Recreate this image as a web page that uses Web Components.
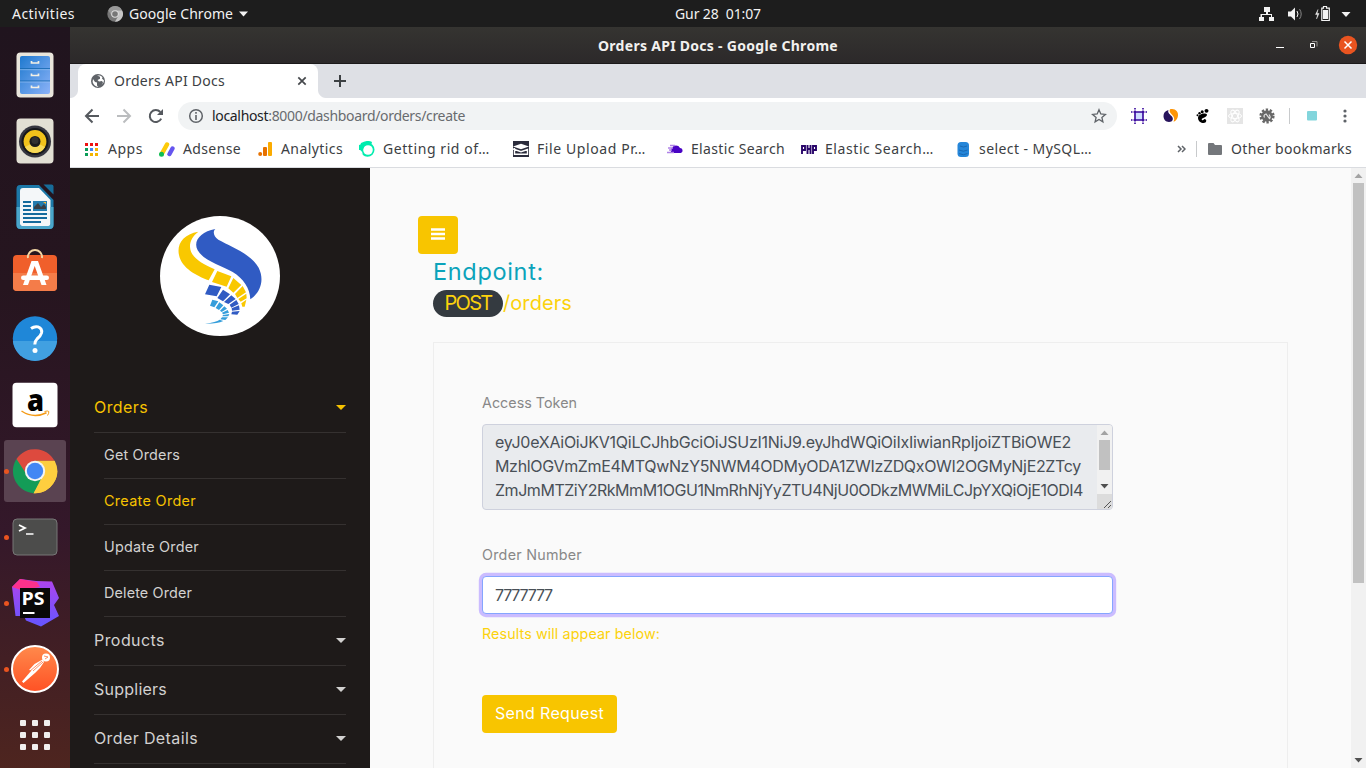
<!DOCTYPE html>
<html lang="en">
<head>
<meta charset="utf-8">
<title>Orders API Docs</title>
<style>
html,body{margin:0;height:100%;overflow:hidden;background:#20141e}
</style>
</head>
<body>
<desk-top></desk-top>
<script>
const make = (name, html, extra) => {
  const t = document.createElement('template');
  t.innerHTML = html;
  customElements.define(name, class extends HTMLElement {
    constructor() {
      super();
      this.attachShadow({mode: 'open'}).append(t.content.cloneNode(true));
    }
    connectedCallback() { if (extra) extra(this, this.shadowRoot); }
  });
};

make('desk-top', `<style>
:host{display:grid;grid-template:27px 741px / 70px 1296px;width:1366px;height:768px;font-family:"Noto Sans","Open Sans",sans-serif;overflow:hidden}
top-bar{grid-column:1/3}
</style><top-bar></top-bar><app-dock></app-dock><browser-window></browser-window>`);

make('top-bar', `<style>
:host{display:grid;grid-template-columns:675px 86px 1fr;align-items:center;background:#1d1d1d;color:#f2f2f2;font-size:14px;line-height:27px;height:27px}
.l,.r{display:flex;align-items:center}
.l{padding-left:12px}.r{justify-content:flex-end;padding-right:15px}
svg{display:block}
.c{margin-left:32px;margin-right:6px}.d{margin-left:6px}
</style>
<div class="l"><fit-text w="63">Activities</fit-text>
<svg class="c" width="16" height="16" viewBox="0 0 16 16"><circle cx="8" cy="8" r="7.7" fill="#777"/><path d="M8 4.2H15A7.7 7.7 0 0 1 8 15.7L11.4 9.7Z" fill="#c6c6c6"/><path d="M1.3 4.2A7.7 7.7 0 0 1 15 4.2H8L4.6 10Z" fill="#989898"/><circle cx="8" cy="8" r="3.8" fill="#ddd"/><circle cx="8" cy="8" r="2.8" fill="#777"/></svg>
<fit-text w="104">Google Chrome</fit-text>
<svg class="d" width="9" height="6" viewBox="0 0 9 6"><path d="M0 .5h9L4.500 5.500z" fill="#f2f2f2"/></svg></div>
<fit-text w="86">Gur 28  01:07</fit-text>
<div class="r">
<svg width="93" height="18" viewBox="1258 4 93 18" fill="#f2f2f2"><path d="M1264 6h6v5h-2v2h4v3h2v4h-5v-4h2v-2h-9v2h2v4h-5v-4h1.500v-3h5.500v-2h-2z"/><path d="M1288 10.500h3l4-4v13l-4-4h-3z"/><path d="M1297 10q2 3 0 6" fill="none" stroke="#f2f2f2"/><path d="M1299.500 8q3.400 5 0 10" fill="none" stroke="#888"/><path d="M1318 8.500l-2.500 5h2l-1 4.500 2.600-5.500h-2z" stroke="#f2f2f2" stroke-width=".4"/><path d="M1321.800 7.200h1.700V5.500h3v1.700h2.800v12.300h-7.500z" fill="none" stroke="#f2f2f2" stroke-width="1.200"/><path d="M1323 9h5v9h-5z"/><path d="M1341.500 11h9l-4.500 5z"/></svg>
</div>`);

make('app-dock', `<style>
:host{display:grid;grid-auto-rows:66px;align-content:start;padding-top:15px;box-sizing:border-box;height:741px;overflow:hidden;background:linear-gradient(#20141e,#26151f 35%,#34182a 68%,#4e251f)}
</style>
<dock-item><svg viewBox="11 51 48 48"><defs><linearGradient id="g" x2="1" y2="1"><stop stop-color="#1e79cf"/><stop offset="1" stop-color="#8cb3f8"/></linearGradient></defs><rect x="16.500" y="52.500" width="37" height="45" rx="4" fill="#e9e6dc"/><rect x="20" y="56" width="30" height="38" rx="2" fill="url(#g)"/><path d="M20 68.700h30M20 81h30" stroke="#1769b1"/><path d="M20 69.700h30M20 82h30" stroke="#a4cbf8" stroke-width=".6"/><path d="M31.500 61v2h7v-2M31.500 73.500v2h7v-2M31.500 85.500v2h7v-2" fill="none" stroke="#f4f0e5" stroke-width="1.700"/></svg></dock-item>
<dock-item><svg viewBox="11 117 48 48"><rect x="16.500" y="118.500" width="37" height="45" rx="4" fill="#e2dfd4"/><circle cx="35" cy="141.500" r="16" fill="#363640"/><circle cx="35" cy="141.500" r="13.500" fill="#16171b"/><circle cx="35" cy="141.500" r="11.400" fill="#f1c21b"/><path d="M25 147a11.400 11.400 0 0 0 20 0L35 142z" fill="#f7d957"/><circle cx="35" cy="141.500" r="5.500" fill="#1b1b1c"/><circle cx="35" cy="140.500" r="3.500" fill="#313131"/></svg></dock-item>
<dock-item><svg viewBox="11 183 48 48"><path d="M20 185h19l14.500 15v25q0 4-4 4H20.500q-4 0-4-4V189q0-4 3.500-4z" fill="#1c78a8"/><path d="M23 188h16l11.500 12v24q0 2-2 2H22q-2 0-2-2v-33q0-3 3-3z" fill="#f4f7f9"/><path d="M43.500 184.500h8q2 0 2 2v8z" fill="#176c99"/><path d="M16.500 207h3.500v17q0 2 2 2h26.500q2 0 2-2v-17h3v18q0 4-4 4H20.500q-4 0-4-4z" fill="#4aa5ca"/><path d="M23 202h8M23 206h8M23 210h8M23 214h24M23 218h24M23 222h18" stroke="#156b9d" stroke-width="2"/><rect x="33" y="201" width="14" height="10" fill="#247caf"/><path d="M34 209v-2l4-4 3 4 3-3 2 3v2z" fill="#394047"/><path d="M43 202h3v2z" fill="#fb3"/></svg></dock-item>
<dock-item><svg viewBox="11 249 48 48"><path d="M28 258v-1a7 7 0 0 1 14 0v1" fill="none" stroke="#f2d6a5" stroke-width="2"/><rect x="13" y="255" width="44" height="36" rx="4" fill="#f05f2b"/><path d="M13 273h44v14q0 4-4 4H17q-4 0-4-4z" fill="#f47c49"/><path d="M28 258a7 5 0 0 1 .3-3m13.600 3a7 5 0 0 0-.3-3" stroke="#f2d6a5" stroke-width="2" fill="none"/><path d="M31.500 261h6.500l8.500 24H41.500l-6.800-19-6.700 19H23z" fill="#fff"/><rect x="21" y="275.500" width="28" height="4.500" rx="2.200" fill="#fff"/></svg></dock-item>
<dock-item><svg viewBox="11 315 48 48"><circle cx="35" cy="338.500" r="22.200" fill="#1f87d8"/><path d="M12.900 341a22.200 22.200 0 0 0 44.200 0z" fill="#41a0e1"/><path d="M31 328.500q3.500-2.500 7-1.600 4.500 1.500 3.500 6.100-.7 2.800-4.500 6-2.100 2-2.200 5.500" fill="none" stroke="#fff" stroke-width="3"/><circle cx="35" cy="350.500" r="2.500" fill="#fff"/></svg></dock-item>
<dock-item><svg viewBox="11 381 48 48"><rect x="12.500" y="382.700" width="45" height="44.600" rx="4" fill="#fff"/><text x="27" y="410.700" font-family="Open Sans" font-weight="800" font-size="29.500" fill="#000" textLength="17" lengthAdjust="spacingAndGlyphs">a</text><path d="M21.500 411q12 8 25 1.800" fill="none" stroke="#f49b17" stroke-width="1.500"/><path d="M44.500 411.500q3.500-1 4.300 0 .3 1.700-1.300 4" fill="none" stroke="#f49b17"/></svg></dock-item>
<dock-item on dot><svg viewBox="11 447 48 48"><path d="M35 471h22.200A22.200 22.200 0 0 1 33.500 493.200z" fill="#fece3f"/><path d="M16.500 459A22.200 22.200 0 0 0 33.700 493.200L43 475l-8-6z" fill="#149c57"/><path d="M16.500 459A22.200 22.200 0 0 1 54.500 460.800H35L27 475z" fill="#dd4a3e"/><path d="M44 475.500l-10.300 17.700A22.200 22.200 0 0 0 54.700 460.800H35z" fill="#fece3f"/><circle cx="35" cy="471" r="10.200" fill="#f4f4f4"/><circle cx="35" cy="471" r="8.200" fill="#4287f4"/></svg></dock-item>
<dock-item dot><svg viewBox="11 513 48 48"><rect x="13" y="519" width="44" height="36" rx="4" fill="#4c4c4b" stroke="#777"/><path d="M19 525l6 3-6 3" fill="none" stroke="#fff" stroke-width="1.800"/><path d="M26 534h7.500" stroke="#fff" stroke-width="1.500"/></svg></dock-item>
<dock-item dot><svg viewBox="11 579 48 48"><defs><linearGradient id="p" x2="0" y2="1"><stop stop-color="#b144ee"/><stop offset="1" stop-color="#6456ff"/></linearGradient></defs><path d="M12 587l8-8 16 2 16 .5 7 16.500-5 7 5 11-18 10.500-15-6-2-4.500h-8.500z" fill="url(#p)"/><path d="M12 587l8-8 17 3 3 5-19 3z" fill="#fc318c"/><rect x="20" y="588" width="30" height="30" fill="#090909"/><text x="21.500" y="604.500" font-family="Open Sans" font-size="17" font-weight="700" fill="#fff" textLength="23" lengthAdjust="spacingAndGlyphs">PS</text><path d="M23 613h11.500" stroke="#fff" stroke-width="2"/></svg></dock-item>
<dock-item dot><svg viewBox="11 645 48 48"><defs><linearGradient id="o" x2="0" y2="1"><stop stop-color="#ff8a4c"/><stop offset="1" stop-color="#ff5124"/></linearGradient></defs><circle cx="35" cy="669" r="23" fill="url(#o)" stroke="#fff" stroke-width="2"/><circle cx="46" cy="657.500" r="4" fill="#fff"/><path d="M42.500 659.500l-8 4.500-5.500 6 2.500.5-9.500 11 1.500 1.500 11.500-10 5-5 4-6z" fill="#fff"/><path d="M42 661l-12 10m13-9-10 9M44 656l4 1-3 2" fill="none" stroke="#ff7340" stroke-width=".8"/></svg></dock-item>
<dock-item><svg viewBox="11 711 48 48" fill="#f1efee"><g id="r"><rect x="20" y="720" width="6" height="6" rx="1"/><rect x="32" y="720" width="6" height="6" rx="1"/><rect x="44" y="720" width="6" height="6" rx="1"/></g><use href="#r" y="12"/><use href="#r" y="24"/></svg></dock-item>`);

make('dock-item', `<style>
:host{display:flex;align-items:center;padding:2px 4px;box-sizing:border-box;height:66px}
div{display:flex;align-items:center;width:62px;height:62px;border-radius:3px}
:host([on]) div{background:#5a4351}
i{width:5px;height:5px;margin-right:2px;border-radius:50%}
:host([dot]) i{background:#e95420}
::slotted(svg){display:block;width:48px;height:48px}
</style><div><i></i><slot></slot></div>`);

make('browser-window', `<style>
:host{display:grid;grid-template-rows:37px 34px 36px 33px 1px 600px;background:#fff;overflow:hidden}
.line{background:#dadce0}
.page{display:grid;grid-template-columns:300px 981px 15px;overflow:hidden;font-family:Inter,sans-serif}
</style><title-bar></title-bar><tab-strip></tab-strip><tool-bar></tool-bar><bookmark-bar></bookmark-bar><div class="line"></div><div class="page"><side-bar></side-bar><main-view></main-view><page-scroll></page-scroll></div>`);

make('title-bar', `<style>
:host{display:grid;grid-template-columns:1fr auto 1fr;align-items:center;background:linear-gradient(#353431,#2c292a);border-bottom:1px solid #1b191a;box-sizing:border-box;color:#f2f1ef;font-size:14px;font-weight:700;line-height:34px}
svg{justify-self:end;display:block}
fit-text{padding-top:2px}
</style><span></span><fit-text w="240">Orders API Docs - Google Chrome</fit-text>
<svg width="96" height="20" viewBox="1270 35 96 20"><path d="M1276 47.500h8" stroke="#fff"/><path d="M1310.500 43.500h4v4h-4z" fill="none" stroke="#fff"/><path d="M1312 41.500h5v5" fill="none" stroke="#918f8c"/><circle cx="1348" cy="45" r="9.200" fill="#e95420"/><path d="M1344.500 41.500l7 7m0-7l-7 7" stroke="#fff" stroke-width="1.500"/></svg>`);

make('tab-strip', `<style>
:host{display:flex;align-items:center;background:#dee0e5;color:#3c4043;font-size:14px;line-height:34px}
svg{display:block}
.s{width:8px;height:34px;background:radial-gradient(circle at 0 0,#dee0e5 7.500px,#fff 8.500px) 0 100%/8px 8px no-repeat}
.s.r{background:radial-gradient(circle at 8px 0,#dee0e5 7.500px,#fff 8.500px) 0 100%/8px 8px no-repeat}
.tab{display:flex;align-items:center;width:240px;height:34px;background:#fff;border-radius:8px 8px 0 0;box-sizing:border-box;padding:0 11px 0 13px}
.x{margin-left:auto}.p{margin-left:8px}
</style><div class="s"></div><div class="tab"><svg width="14" height="14" viewBox="0 0 14 14"><circle cx="7" cy="7" r="7" fill="#5f6368"/><path d="M2 5l2 3 2 .5v3l1.500 1.500Q3 12.500 1.600 8zM6 1.500l3 1.200v2L6.500 6 8 7.500l3-.5 1 1.500-1.500 2.500 2-2.500.5-2-2-2 .5-1.500L9 1.500z" fill="#fff"/></svg><fit-text w="111" style="margin-left:9px">Orders API Docs</fit-text><svg class="x" width="10" height="10" viewBox="0 0 10 10"><path d="M1.300 1.300l7.400 7.400m0-7.400L1.300 8.700" stroke="#45484c" stroke-width="1.700"/></svg></div><div class="s r"></div>
<svg class="p" width="12" height="12" viewBox="0 0 12 12"><path d="M6 0v12M0 6h12" stroke="#3c4043" stroke-width="2"/></svg>`);

make('tool-bar', `<style>
:host{display:flex;align-items:center;padding:0 13px 0 14px;height:36px;box-sizing:border-box}
svg{display:block;flex:none}
.nav,.ext{display:flex;align-items:center}.nav{gap:16px}.ext{gap:16px;margin-left:14px}
.box{display:flex;align-items:center;flex:none;width:939px;height:28px;box-sizing:border-box;padding:0 10px;margin-left:14px;border-radius:14px;background:#f1f3f4;color:#686b6f;font-size:14px;line-height:28px}
b{font-weight:400;color:#202124}.star{margin-left:auto}
.v{width:1px;height:16px;background:#c8cacc;margin:0 1px 0 -2px}
</style>
<div class="nav"><svg width="16" height="16" viewBox="0 0 16 16"><path d="M15 8H2.500M8.500 1.500L2 8l6.500 6.500" fill="none" stroke="#55595e" stroke-width="2"/></svg><svg width="16" height="16" viewBox="0 0 16 16"><path d="M1 8h12.500M7.500 1.500L14 8l-6.500 6.500" fill="none" stroke="#bbbdbf" stroke-width="2"/></svg><svg width="16" height="16" viewBox="0 0 16 16"><path d="M13.200 10.600A6 6 0 1 1 12.300 4" fill="none" stroke="#55595e" stroke-width="2"/><path d="M15 1v6H9z" fill="#55595e"/></svg></div>
<div class="box"><svg width="16" height="16" viewBox="0 0 16 16"><circle cx="8" cy="8" r="6.300" fill="none" stroke="#5f6368" stroke-width="1.500"/><path d="M8 7v5M8 4v1.700" stroke="#5f6368" stroke-width="1.600"/></svg><fit-text w="253" style="margin-left:8px"><b>localhost</b>:8000/dashboard/orders/create</fit-text><svg class="star" width="16" height="16" viewBox="0 0 16 16"><path d="M8 1.700l1.800 4.300 4.600.4-3.500 3 1 4.500L8 11.500l-3.900 2.400 1-4.500-3.500-3 4.600-.4z" fill="none" stroke="#5f6368" stroke-width="1.300"/></svg></div>
<div class="ext">
<svg width="16" height="16" viewBox="0 0 16 16"><path d="M4 4h8v8H4z" fill="#cfdcff"/><path d="M4 0v16M12 0v16M0 4h16M0 12h16" stroke="#35049b" stroke-width="1.600" stroke-dasharray="1.500 1 11 1 1.500"/></svg>
<svg width="16" height="16" viewBox="0 0 16 16"><path d="M5.500 2C2 3 .5 5 .5 8s2 6 5.500 6c4 0 5-3.500 2.500-6S4.500 4.500 5.500 2z" fill="#28145c"/><path d="M7 1.300c5-1.300 8.500 2.200 8 6.200s-3 6-4.500 6.300c1.500-3 .5-5-1.500-7s-3-3.500-2-5.500z" fill="#fd9507"/></svg>
<svg width="16" height="16" viewBox="0 0 16 16"><path d="M12 6.500c-2-2-9-.5-9 3.500 0 3 3 5 5.500 5 3.500 0 3.500-4 1-4-1 0-1 2-2.500 1-2-2 5-2 5-5.500z"/><ellipse cx="11.500" cy="2.800" rx="2" ry="1.900"/><circle cx="7.200" cy="3.700" r="1.500"/><circle cx="4.500" cy="5.200" r="1.200"/><circle cx="2.500" cy="7.200" r="1"/></svg>
<svg width="16" height="16" viewBox="0 0 16 16"><path d="M0 0h16v16H0z" fill="#e5e5e5"/><g fill="none" stroke="#fff"><ellipse cx="8" cy="8" rx="6.500" ry="2.600"/><ellipse cx="8" cy="8" rx="6.500" ry="2.600" transform="rotate(60 8 8)"/><ellipse cx="8" cy="8" rx="6.500" ry="2.600" transform="rotate(120 8 8)"/></g></svg>
<svg width="16" height="16" viewBox="0 0 16 16"><circle cx="8" cy="8" r="6.300" fill="none" stroke="#686868" stroke-width="2.600" stroke-dasharray="2.300 1.658"/><circle cx="8" cy="8" r="5.800" fill="#686868"/><path d="M5.500 9.500Q4 7 7 6l3.500 4.500Q12 9 10 6.500" fill="none" stroke="#e4e4e4" stroke-width="1.200"/></svg>
<div class="v"></div>
<svg width="10" height="10" viewBox="0 0 10 10"><rect width="10" height="9.500" rx="1" fill="#82d5dc"/></svg>
<svg style="margin-left:10px" width="4" height="14" viewBox="0 0 4 14" fill="#5f6368"><circle cx="2" cy="2" r="1.600"/><circle cx="2" cy="7" r="1.600"/><circle cx="2" cy="12" r="1.600"/></svg>
</div>`);

make('bookmark-bar', `<style>
:host{display:flex;align-items:center;padding:0 14px;height:33px;padding-bottom:3px;box-sizing:border-box;color:#3c4043;font-size:14px;line-height:30px}
svg{display:block}
.g{margin-left:16px}.end{display:flex;align-items:center;margin-left:auto}.v{width:1px;height:16px;background:#c8cacc;margin:0 10px}
</style>
<book-mark><svg viewBox="0 0 16 16"><path d="M1 2h3v3H1zM6 2h3v3H6zM11 2h3v3h-3z" fill="#e11"/><path d="M1 7h3v3H1zM1 12h3v3H1z" fill="#0a9d58"/><path d="M6 7h3v3H6z" fill="#4285f4"/><path d="M11 7h3v3h-3zM6 12h3v3H6zM11 12h3v3h-3z" fill="#f4b400"/></svg><fit-text w="35">Apps</fit-text></book-mark>
<book-mark class="g"><svg viewBox="0 0 16 16"><path d="M3 12.500L8 3.500" stroke="#fdcb0a" stroke-width="4.500" stroke-linecap="round"/><path d="M10.500 13L13.500 7.500" stroke="#6555ef" stroke-width="4.300" stroke-linecap="round"/><circle cx="2.500" cy="13.300" r="2.500" fill="#0fbe55"/></svg><fit-text w="58">Adsense</fit-text></book-mark>
<book-mark class="g"><svg viewBox="0 0 16 16"><rect x="11" y="1" width="4" height="14" rx="1" fill="#fbab00"/><rect x="6" y="6" width="4" height="9" rx="1" fill="#e77200"/><circle cx="3.200" cy="13" r="2" fill="#e77200"/></svg><fit-text w="62">Analytics</fit-text></book-mark>
<book-mark class="g"><svg viewBox="0 0 16 16"><path d="M2 2q6-3.500 11-1l-1 4H1z" fill="#00ecae"/><circle cx="8.500" cy="8.800" r="7" fill="#00ecae"/><circle cx="9" cy="9" r="4.800" fill="#fff"/><path d="M0 4l8-2-3 4-1.500 3H0zM0 8.500l3.500-2v3z" fill="#00ecae"/><path d="M0 9.500l3 1 1 4z" fill="#fff"/></svg><fit-text w="107">Getting rid of…</fit-text></book-mark>
<book-mark style="margin-left:23px"><svg viewBox="0 0 16 16"><path d="M0 0h16v16H0z" fill="#2b2c3c"/><path d="M0 5.500l8-2.700 8 2.700-8 2.700z" fill="#fff"/><path d="M1.500 7v6.300h13V8.500L8 10.700 0 8" fill="none" stroke="#fff" stroke-width="1.400"/></svg><fit-text w="109">File Upload Pr…</fit-text></book-mark>
<book-mark style="margin-left:21px"><svg viewBox="0 0 16 16"><path d="M5 12a3 3 0 0 1 0-5 4.500 4.500 0 0 1 8 0 2.600 2.600 0 0 1 1 5z" fill="#4903c4"/><path d="M3 4.500h5M1 7h5M2 9h3M0 11.500h7" stroke="#b083e7" stroke-width="1.300"/></svg><fit-text w="94">Elastic Search</fit-text></book-mark>
<book-mark class="g"><svg viewBox="0 0 16 16"><path d="M1 13V5h3v4H1M6.500 4v9M6.500 8h3M9.500 4v9M12 13V5h3v4h-3" fill="none" stroke="#29066a" stroke-width="1.900"/></svg><fit-text w="109">Elastic Search…</fit-text></book-mark>
<book-mark style="margin-left:21px"><svg viewBox="0 0 16 16"><rect x="2.500" y="1" width="11.500" height="15" rx="3.500" fill="#2586d9"/><path d="M5 5q3.500 2 7 0M4 9q4.500 2.500 8.500 0M4 12.500q4.500 2.500 8.500 0" fill="none" stroke="#1b69b3"/></svg><fit-text w="113">select - MySQL…</fit-text></book-mark>
<div class="end"><svg width="9" height="8" viewBox="0 0 9 8"><path d="M1 1l3 3-3 3M5 1l3 3-3 3" fill="none" stroke="#5f6368" stroke-width="1.500"/></svg><div class="v"></div><book-mark><svg viewBox="0 0 16 16"><path d="M1 3q0-1 1-1h4.500L8 4h6q1 0 1 1v8q0 1-1 1H2q-1 0-1-1z" fill="#74777b"/></svg><fit-text w="121">Other bookmarks</fit-text></book-mark></div>`);

make('book-mark', `<style>:host{display:flex;align-items:center;gap:8px;flex:none}::slotted(svg){display:block;width:16px;height:16px}</style><slot></slot>`);

make('side-bar', `<style>
:host{display:flex;flex-direction:column;background:#1e1a19;padding:48px 24px 0;height:600px;box-sizing:border-box;overflow:hidden}
.logo{display:block;width:120px;height:120px;margin:0 auto 48px}
nav{display:flex;flex-direction:column}
</style>
<svg class="logo" viewBox="30 33 360 360"><circle cx="210" cy="213" r="180" fill="#fff"/><path d="M196 72C188 79 190 94 205 104C245 126 300 145 326 188C344 225 332 262 301 283C300 250 280 220 248 201C215 182 162 168 143 136C128 108 152 80 196 72Z" fill="#305bc3"/><path d="M145 80C98 88 80 118 87 150C95 190 140 212 176 226L194 193C150 174 121 154 120 125C120 105 130 92 145 80Z" fill="#f9c800"/><path d="M202 198L244 214L230 245L186 231ZM250 219L274 240L250 263L235 250ZM278 243L288 262L262 279L255 267ZM289 266L290 280L272 290L265 282ZM289 284L284 305L277 305L274 295Z" fill="#f9c800"/><path d="M178 239L214 246L200 274L165 268ZM219 254L240 268L219 289L202 279ZM244 271L257 282L235 297L222 291ZM259 285L266 297L244 308L239 299ZM267 301L269 314L246 317L245 310ZM269 318L262 329L244 328L246 320Z" fill="#305bc3"/><path d="M187 284L205 289L193 307L180 302ZM208 292L220 301L207 315L197 309ZM223 304L231 311L215 321L210 317ZM233 315L237 323L219 328L216 323ZM238 327L235 334L217 334L219 330ZM234 337L226 345L211 343L216 337ZM220 348Q200 357 165 356Q198 351 209 344Z" fill="#359edb"/></svg>
<nav><nav-row w="54" on>Orders</nav-row>
<nav-row sub w="76">Get Orders</nav-row><nav-row sub w="92" on>Create Order</nav-row><nav-row sub w="95">Update Order</nav-row><nav-row sub w="88">Delete Order</nav-row>
<nav-row w="71">Products</nav-row><nav-row w="73">Suppliers</nav-row><nav-row w="104">Order Details</nav-row></nav>`);

make('nav-row', `<style>
:host{display:flex;align-items:center;justify-content:space-between;height:49px;padding-bottom:2px;box-sizing:border-box;border-bottom:1px solid #353130;color:#d2d1d0;font-size:16px;line-height:46px}
:host([sub]){height:46px;margin-left:10px;font-size:14.400px;line-height:43px}
:host([on]){color:#f6c200}
i{width:0;height:0;border:5px solid transparent;border-top-color:currentColor;border-bottom:0}
:host([sub]) i{display:none}
</style><fit-text><slot></slot></fit-text><i></i>`, (el, r) => r.querySelector('fit-text').setAttribute('w', el.getAttribute('w')));

make('main-view', `<style>
:host{display:block;background:#fafafa;padding:48px 63px 0 48px;height:600px;box-sizing:border-box;overflow:hidden}
.menu{display:grid;place-items:center;width:40px;height:38px;border-radius:4px;background:#f8c500;padding-bottom:2px;box-sizing:border-box}
.in{padding-left:15px}
h3{margin:0;height:36px;line-height:36px;font-size:23.500px;font-weight:400;color:#0ba3bb}
.ep{display:flex;align-items:center;height:27px;font-size:20px;line-height:27px;color:#fcd20c}
.pill{display:flex;justify-content:center;width:70px;height:27px;border-radius:14px;background:#343a40}
.card{display:flex;flex-direction:column;align-items:flex-start;border:1px solid #eee;margin-top:25px;height:500px;padding:48px;box-sizing:border-box;width:855px}
label{display:block;height:24px;line-height:24px;font-size:14.300px;color:#888;}
input-box{margin-top:9px}
.res{height:24px;line-height:24px;font-size:14.300px;color:#fcd20c;margin-top:8px}
.send{display:flex;justify-content:center;width:135px;height:38px;margin-top:49px;border-radius:4px;background:#f8c500;color:#fff;font-size:16px;line-height:36px}
</style>
<div class="menu"><svg width="14" height="12" viewBox="0 0 14 12"><path d="M0 1.500h14M0 6h14M0 10.500h14" stroke="#fff" stroke-width="2.300"/></svg></div>
<div class="in"><h3><fit-text w="111">Endpoint:</fit-text></h3>
<div class="ep"><div class="pill"><fit-text w="47">POST</fit-text></div><fit-text w="69">/orders</fit-text></div>
<div class="card"><label><fit-text w="95">Access Token</fit-text></label><token-area></token-area>
<label style="margin-top:33px"><fit-text w="100">Order Number</fit-text></label><input-box></input-box>
<div class="res"><fit-text w="178">Results will appear below:</fit-text></div>
<div class="send"><fit-text w="109">Send Request</fit-text></div></div></div>`);

make('token-area', `<style>
:host{display:flex;width:631px;height:86px;margin-top:9px;border:1px solid #ced1dd;border-radius:4px;background:#e9ebee;color:#495057;font-size:16px;line-height:24px;box-sizing:border-box;overflow:hidden}
.t{flex:1;padding:5px 0 0 12px;overflow:hidden}.t fit-text{display:block}.t .last{margin-top:2px}
</style><div class="t"><fit-text w="576">eyJ0eXAiOiJKV1QiLCJhbGciOiJSUzI1NiJ9.eyJhdWQiOiIxIiwianRpIjoiZTBiOWE2</fit-text><fit-text w="586">MzhlOGVmZmE4MTQwNzY5NWM4ODMyODA1ZWIzZDQxOWI2OGMyNjE2ZTcy</fit-text><fit-text w="588">ZmJmMTZiY2RkMmM1OGU1NmRhNjYyZTU4NjU0ODkzMWMiLCJpYXQiOjE1ODI4</fit-text><fit-text class="last" w="582">NDA0MDcsIm5iZiI6MTU4Mjg0MDQwNywiZXhwIjoxNjE0NDYyODA3LCJzdWIi</fit-text></div>
<svg width="15" height="84" viewBox="0 0 15 84"><path d="M0 0h15v84H0z" fill="#f1f1f1"/><path d="M2 15h11v30H2z" fill="#c1c1c1"/><path d="M3.500 10h8l-4-4.500z" fill="#a3a3a3"/><path d="M3.500 59h8l-4 4.500z" fill="#505050"/><path d="M0 69h15v15H0z" fill="#dcdcdc"/><path d="M7 83l7-7M11 83l3-3" stroke="#555"/></svg>`);

make('input-box', `<style>
:host{display:flex;align-items:center;width:631px;height:38px;padding-left:12px;box-sizing:border-box;border:1px solid #85a5ff;border-radius:4px;background:#fff;box-shadow:0 0 0 3.200px #cbbcff;color:#495057;font-size:16px;line-height:36px}
</style><fit-text w="57">7777777</fit-text>`);

make('page-scroll', `<style>:host{display:block;background:#f1f1f1;height:600px}svg{display:block}</style>
<svg width="15" height="600" viewBox="0 0 15 600"><path d="M2 15h11v400H2z" fill="#c1c1c1"/><path d="M3.500 10h8l-4-4.500z" fill="#a3a3a3"/><path d="M3.500 590h8l-4 4.500z" fill="#505050"/></svg>`);

/* Sets its text to the width given in "w" by spreading the letters evenly. */
make('fit-text', `<style>:host{display:inline-block;flex:none;white-space:pre}span{white-space:pre;display:inline-block}</style><span><slot></slot></span>`, (el, r) => {
  const w = +el.getAttribute('w'), s = r.querySelector('span');
  let text = el.textContent;
  if (!text.trim()) text = el.querySelector('slot').assignedNodes().map(n => n.textContent).join('');
  el.style.width = w + 'px';
  s.style.letterSpacing = (w - s.getBoundingClientRect().width) / text.length + 'px';
});
</script>
</body>
</html>
